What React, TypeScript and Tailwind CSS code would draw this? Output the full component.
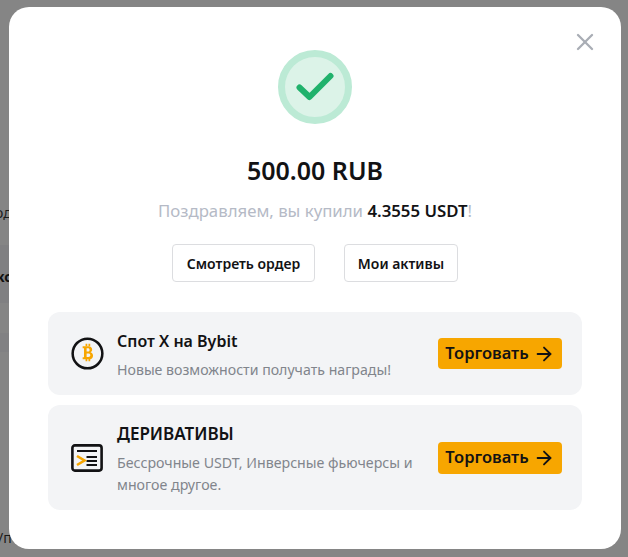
import { X, ArrowRight } from "lucide-react";

function BtcIcon() {
  return (
    <svg width="33" height="33" viewBox="0 0 34 34" fill="none">
      <circle cx="17" cy="17" r="15.3" stroke="#121214" strokeWidth="2.6" />
      <path
        d="M12 9.5h6c2.3 0 3.8 1.4 3.8 3.4 0 1.3-.6 2.3-1.7 2.9 1.6.5 2.6 1.8 2.6 3.4 0 2.3-1.7 3.8-4.2 3.8H12v-2.2h1.4v-9.1H12V9.5Zm4.1 2.2v3.2h1.3c1.1 0 1.7-.6 1.7-1.6s-.6-1.6-1.7-1.6h-1.3Zm0 5.3v3.5h1.8c1.2 0 2-.7 2-1.8s-.8-1.7-2-1.7h-1.8Z"
        fill="#f7a600"
      />
      <path d="M15 7h1.8v2.6H15zM18 7h1.8v2.6H18zM15 22.4h1.8V25H15zM18 22.4h1.8V25H18z" fill="#f7a600" />
    </svg>
  );
}

function DerivIcon() {
  return (
    <svg width="32" height="30" viewBox="0 0 32 30" fill="none">
      <rect x="1.4" y="2.4" width="29.2" height="25.2" rx="2.5" stroke="#121214" strokeWidth="2.6" />
      <path d="M6 8h20" stroke="#121214" strokeWidth="2" />
      <path d="M15.5 14h10.5M15.5 18h10.5M15.5 22h10.5" stroke="#121214" strokeWidth="2" />
      <path d="M6 13l7.5 4.5L6 22" stroke="#f7a600" strokeWidth="2.6" />
    </svg>
  );
}

function TradeButton({ tall }: { tall?: boolean }) {
  return (
    <button
      className={`flex w-[124px] shrink-0 items-center justify-center gap-[4px] rounded-[4px] bg-[#f7a600] text-[16.5px] font-semibold text-[#121214] ${tall ? "h-[32px]" : "h-[31px]"}`}
    >
      Торговать
      <ArrowRight className="h-[22px] w-[22px]" strokeWidth={2} />
    </button>
  );
}

export default function App() {
  return (
    <div
      className="relative flex h-[557px] w-[628px] items-start justify-center overflow-hidden bg-[#858585] pl-[2px] pt-[7px]"
      style={{ fontFamily: '"Noto Sans", "Liberation Sans", sans-serif' }}
    >
      {/* page behind the overlay */}
      <div className="absolute left-0 top-[245px] h-[58px] w-[9px] bg-[#808082]" />
      <div className="absolute left-0 top-[333px] h-[19px] w-[9px] bg-[#818183]" />
      <span className="absolute left-[-5px] top-[202px] text-[14px] text-[#1a1a1a]">од</span>
      <span className="absolute left-[-4px] top-[266px] text-[14px] font-bold text-[#111]">кс</span>
      <span className="absolute left-[-2px] top-[527px] text-[14px] text-[#1a1a1a]">/п</span>

      <div className="relative h-[542px] w-[612px] rounded-[20px] bg-white px-[39px] pt-[43px]">
        <button className="absolute right-[22px] top-[21px] text-[#a9adb5]">
          <X className="h-[28px] w-[28px]" strokeWidth={2} />
        </button>

        <div className="flex flex-col items-center">
          <div className="flex h-[74px] w-[74px] items-center justify-center rounded-full border-[7px] border-[#bcead5] bg-[#dcf3e8]">
            <svg width="38" height="30" viewBox="0 0 38 30" fill="none">
              <path d="M3.5 15.5l10 9.5 21-21" stroke="#20b26c" strokeWidth="6" strokeLinecap="round" strokeLinejoin="round" />
            </svg>
          </div>
          <div className="mt-[30px] text-[25px] font-semibold leading-[32px] text-[#121214]">500.00 RUB</div>
          <div className="mt-[13px] text-[16.8px] leading-[24px] text-[#b5bac6]">
            Поздравляем, вы купили <span className="font-semibold text-[#121214]">4.3555 USDT</span>!
          </div>
          <div className="mt-[21px] flex gap-[29px]">
            <button className="h-[38px] w-[143px] rounded-[4px] border border-[#dcdde0] text-[14px] font-semibold text-[#121214]">
              Смотреть ордер
            </button>
            <button className="h-[38px] w-[114px] rounded-[4px] border border-[#dcdde0] text-[14px] font-semibold text-[#121214]">
              Мои активы
            </button>
          </div>
        </div>

        <div className="mt-[30px] flex flex-col gap-[10px]">
          <div className="flex h-[83px] items-center rounded-[12px] bg-[#f3f4f6] pl-[23px] pr-[20px]">
            <BtcIcon />
            <div className="ml-[13px] mt-[2px] flex-1">
              <div className="text-[16px] font-semibold leading-[24px] text-[#121214]">Спот Х на Bybit</div>
              <div className="mt-[6px] text-[14.15px] leading-[22px] text-[#81858c]">Новые возможности получать награды!</div>
            </div>
            <TradeButton />
          </div>
          <div className="flex h-[105px] items-center rounded-[12px] bg-[#f3f4f6] pl-[23px] pr-[20px]">
            <DerivIcon />
            <div className="ml-[14px] mt-[2px] flex-1">
              <div className="text-[17px] font-semibold leading-[24px] text-[#121214]">ДЕРИВАТИВЫ</div>
              <div className="mt-[6px] w-[300px] text-[14.2px] leading-[22px] text-[#81858c]">
                Бессрочные USDT, Инверсные фьючерсы и многое другое.
              </div>
            </div>
            <TradeButton tall />
          </div>
        </div>
      </div>
    </div>
  );
}
